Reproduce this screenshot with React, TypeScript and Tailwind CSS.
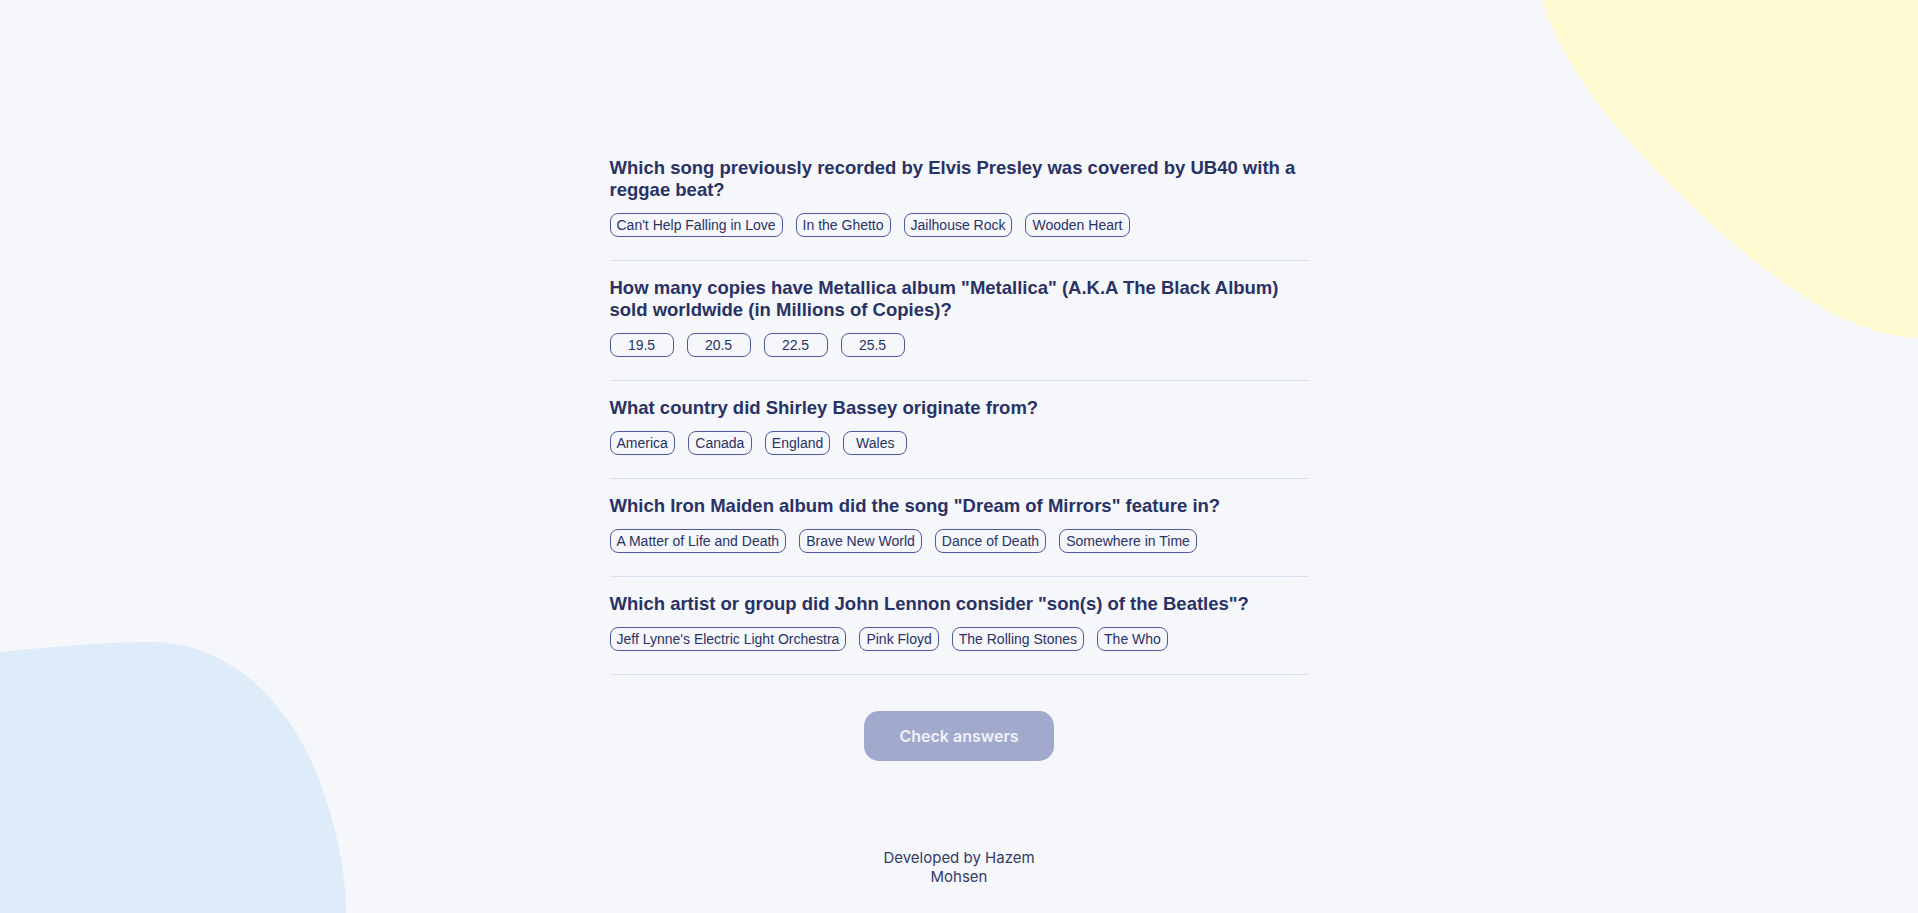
import React from "react";

type Question = {
  question: string;
  answers: string[];
};

const questions: Question[] = [
  {
    question:
      "Which song previously recorded by Elvis Presley was covered by UB40 with a reggae beat?",
    answers: ["Can't Help Falling in Love", "In the Ghetto", "Jailhouse Rock", "Wooden Heart"],
  },
  {
    question:
      'How many copies have Metallica album "Metallica" (A.K.A The Black Album) sold worldwide (in Millions of Copies)?',
    answers: ["19.5", "20.5", "22.5", "25.5"],
  },
  {
    question: "What country did Shirley Bassey originate from?",
    answers: ["America", "Canada", "England", "Wales"],
  },
  {
    question: 'Which Iron Maiden album did the song "Dream of Mirrors" feature in?',
    answers: ["A Matter of Life and Death", "Brave New World", "Dance of Death", "Somewhere in Time"],
  },
  {
    question: 'Which artist or group did John Lennon consider "son(s) of the Beatles"?',
    answers: ["Jeff Lynne's Electric Light Orchestra", "Pink Floyd", "The Rolling Stones", "The Who"],
  },
];

function QuestionBlock({ item }: { item: Question }) {
  return (
    <div className="border-b border-[#DBDEF0] pt-[16px] pb-[23px]">
      <h2 className="text-[18.5px] font-bold leading-[22px] text-[#293264]">{item.question}</h2>
      <div className="mt-[12px] flex flex-wrap gap-[13px]">
        {item.answers.map((answer) => (
          <button
            key={answer}
            className="flex h-[24px] min-w-[64px] items-center justify-center rounded-[8px] border border-[#4D5B9E] px-[6px] text-[14px] leading-none text-[#293264]"
          >
            {answer}
          </button>
        ))}
      </div>
    </div>
  );
}

export default function App() {
  return (
    <div className="relative h-[913px] overflow-hidden bg-[#F5F7FB] font-['Liberation_Sans',sans-serif]">
      {/* yellow blob, top right */}
      <svg
        className="absolute right-0 top-0"
        width="376"
        height="340"
        viewBox="0 0 376 340"
      >
        <path d="M0 0 C25 80 90 150 170 225 C250 295 310 335 376 338 L376 0 Z" fill="#FFFAD1" />
      </svg>
      {/* blue blob, bottom left */}
      <svg
        className="absolute bottom-0 left-0"
        width="346"
        height="271"
        viewBox="0 0 346 271"
      >
        <path
          d="M0 10 C60 4 110 0 150 0 C230 0 290 60 320 140 C340 195 346 240 346 271 L0 271 Z"
          fill="#DEEBF8"
        />
      </svg>

      <main className="relative mx-auto flex w-[699px] flex-col items-center pt-[141px]">
        <div className="w-full">
          {questions.map((q) => (
            <QuestionBlock key={q.question} item={q} />
          ))}
        </div>

        <button
          disabled
          className="mt-[36px] h-[50px] w-[190px] rounded-[15px] bg-[#A1A9CC] font-['Inter',sans-serif] text-[16px] font-semibold text-[#F0F2F9]"
        >
          Check answers
        </button>

        <p className="mt-[87px] w-[170px] text-center font-['Inter',sans-serif] text-[15px] leading-[19px] text-[#343B66]">
          Developed by Hazem Mohsen
        </p>
      </main>
    </div>
  );
}
